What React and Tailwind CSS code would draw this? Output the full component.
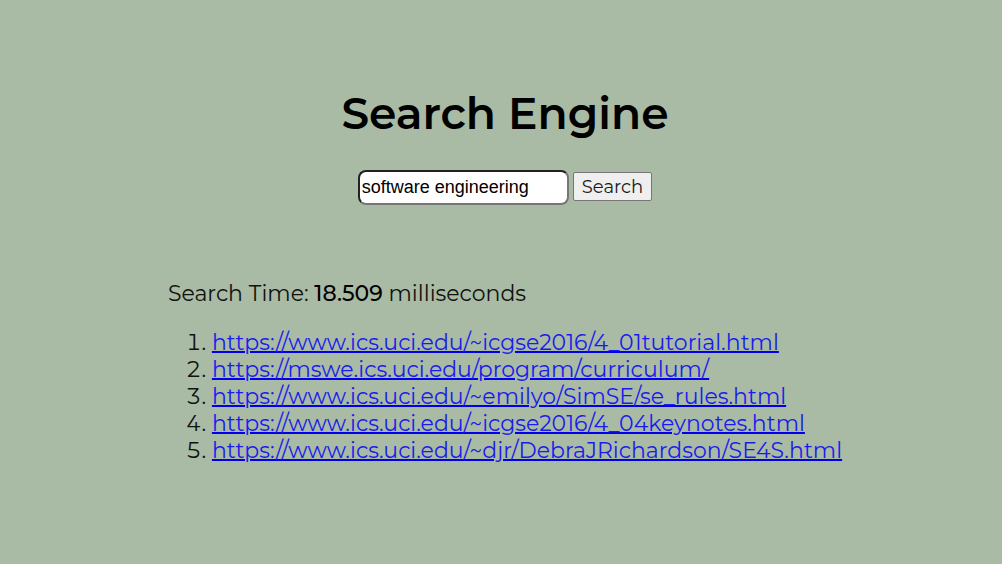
const results = [
  "https://www.ics.uci.edu/~icgse2016/4_01tutorial.html",
  "https://mswe.ics.uci.edu/program/curriculum/",
  "https://www.ics.uci.edu/~emilyo/SimSE/se_rules.html",
  "https://www.ics.uci.edu/~icgse2016/4_04keynotes.html",
  "https://www.ics.uci.edu/~djr/DebraJRichardson/SE4S.html",
];

export default function App() {
  return (
    <main className="flex min-h-screen flex-col items-center bg-[#a9baa5] pt-[83px] pr-4 pb-16 pl-6 font-[Montserrat,Inter,sans-serif] text-black">
      <h1 className="text-[44px] leading-[60px] font-semibold">Search Engine</h1>
      <form className="mt-[27px] flex items-center gap-1" onSubmit={(e) => e.preventDefault()}>
        <input
          type="text"
          aria-label="Search query"
          defaultValue="software engineering"
          className="h-[35px] w-[211px] rounded-lg border-2 border-t-[#222222] border-l-[#222222] border-r-[#767676] border-b-[#767676] bg-white px-0.5 font-['Liberation_Sans',sans-serif] text-lg"
        />
        <button type="submit" className="mb-0.5 h-[29px] rounded-xs border border-[#767676] bg-[#efefef] px-2 text-lg leading-none text-[#1a1a1a]">
          Search
        </button>
      </form>
      <section className="mt-[75px] text-[22px] leading-[27px] text-[#10120f]">
        <p>
          Search Time: <strong className="font-medium text-black">18.509</strong> milliseconds
        </p>
        <ol className="mt-[22px] list-decimal pl-11">
          {results.map((url) => (
            <li key={url}>
              <a href={url} className="text-[#1a1cec] underline decoration-[#0000ee] decoration-2">{url}</a>
            </li>
          ))}
        </ol>
      </section>
    </main>
  );
}
